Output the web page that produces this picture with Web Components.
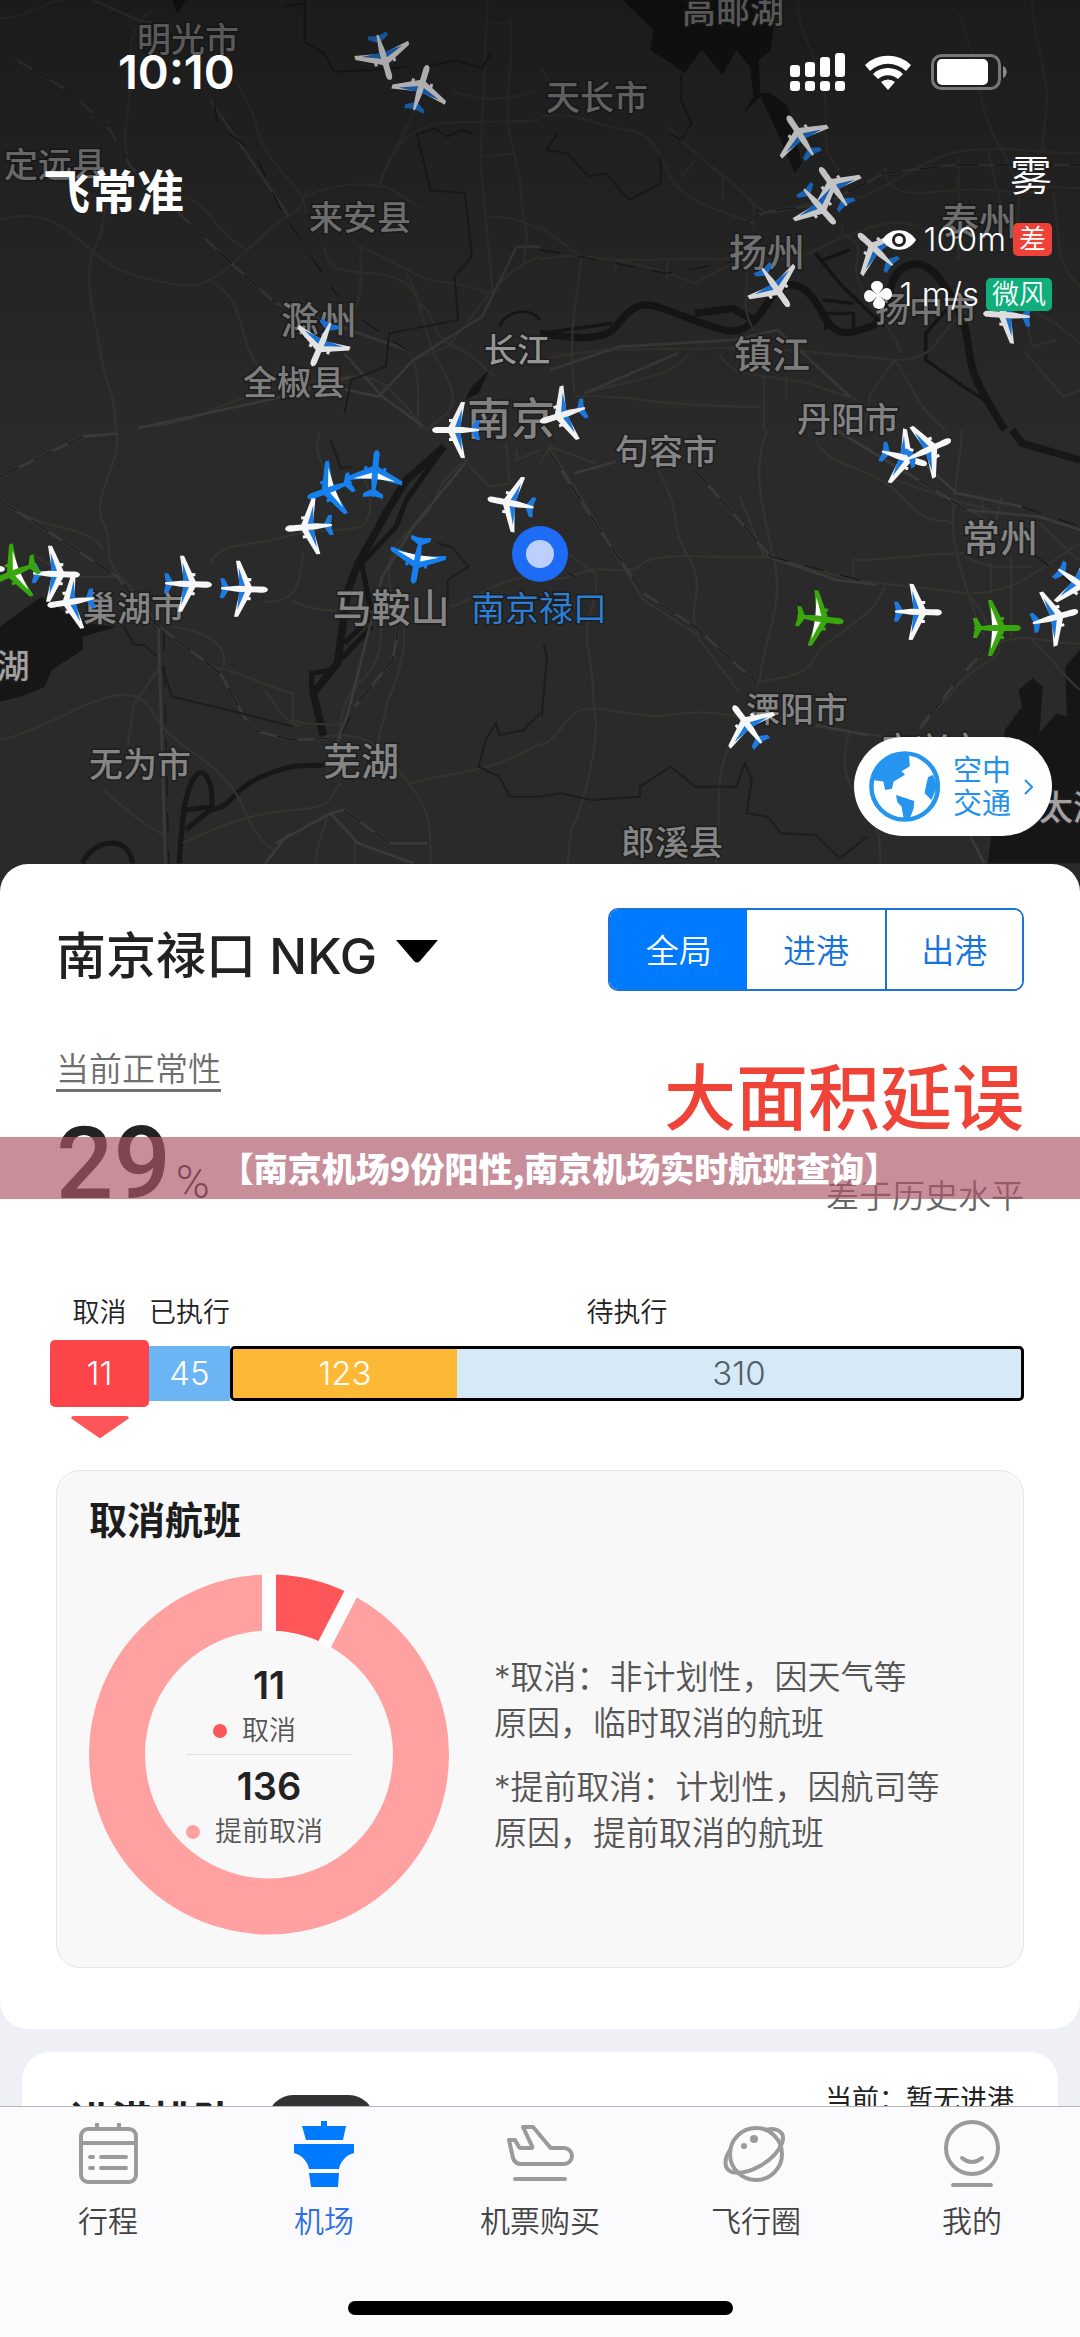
<!DOCTYPE html>
<html lang="zh-CN">
<head>
<meta charset="utf-8">
<meta name="viewport" content="width=device-width, initial-scale=1">
<title>飞常准</title>
<style>
  body { margin: 0; background: #eff0f5; font-family: Inter, "Noto Sans CJK SC", sans-serif; font-weight: 350; color: #222; }
</style>
</head>
<body>
<app-shell>
  <airport-hero></airport-hero>
  <airport-sheet>
    <sheet-head slot="head"></sheet-head>
    <punctuality-stats></punctuality-stats>
    <flight-bar></flight-bar>
    <cancel-panel></cancel-panel>
  </airport-sheet>
  <queue-card></queue-card>
  <title-banner slot="banner">【南京机场9份阳性,南京机场实时航班查询】</title-banner>
  <tab-bar slot="tabs"></tab-bar>
</app-shell>

<script>
const define = (name, html) => customElements.define(name, class extends HTMLElement {
  constructor() {
    super();
    this.attachShadow({ mode: 'open' }).innerHTML = html;
  }
});

define('app-shell', `
<style>
  :host { display: flex; flex-direction: column; height: 100vh; position: relative; overflow: hidden; }
  main { flex: 1; min-height: 0; overflow: hidden; }
</style>
<main><slot></slot></main>
<slot name="banner"></slot>
<slot name="tabs"></slot>`);

/* ---------- map ---------- */
const labels = [
  ['明光市', 188, 37, 34], ['定远县', 55, 162, 34], ['来安县', 360, 215, 34], ['滁州', 319, 317, 38],
  ['全椒县', 294, 380, 34], ['长江', 517, 348, 33, '#a2a2a2'], ['南京', 511, 416, 44], ['高邮湖', 733, 8, 34],
  ['天长市', 597, 95, 34], ['扬州', 767, 249, 38], ['泰州', 979, 218, 38], ['扬中市', 926, 307, 34],
  ['镇江', 772, 351, 38], ['丹阳市', 848, 417, 34], ['句容市', 666, 449, 34], ['常州', 1000, 535, 38],
  ['溧阳市', 797, 707, 34], ['郎溪县', 672, 840, 34], ['宜兴市', 932, 747, 34], ['太湖', 1073, 805, 34, '#a2a2a2'],
  ['巢湖市', 134, 606, 34], ['湖', 13, 664, 33, '#a2a2a2'], ['马鞍山', 391, 605, 39], ['无为市', 140, 762, 34],
  ['芜湖', 361, 758, 38]
];
const planes = [
  ['w', 384, 58, 164], ['w', 421, 87, 17], ['w', 321, 345, 203], ['w', 800, 135, -33], ['w', 833, 186, -35],
  ['w', 820, 207, 138], ['w', 875, 249, -47], ['w', 776, 288, 145], ['w', 1006, 315, -86], ['w', 455, 430, -90],
  ['w', 562, 415, -107], ['w', 747, 724, -37], ['w', 905, 458, 106], ['w', 930, 449, 66], ['w', 919, 612, 91],
  ['g', 821, 619, 97], ['g', 998, 628, 90], ['w', 1056, 617, 75], ['w', 1078, 583, 125], ['b', 329, 490, -110],
  ['b', 375, 473, 5], ['w', 308, 527, -95], ['b', 417, 561, 190], ['w', 510, 503, -79], ['w', -18, 569, 90],
  ['w', 57, 574, 92], ['w', 70, 602, -99], ['g', 14, 573, -112], ['w', 189, 584, 92], ['w', 245, 589, 92]
];
const skins = {
  w: ['#f7f7f7', '#1f7ae0', '#1f7ae0'],
  b: ['#1580ee', '#ffffff', '#1580ee'],
  g: ['#3aa60e', '#ffffff', '#3aa60e']
};
const plane = ([skin, x, y, turn]) => {
  const [body, stripe, tail] = skins[skin];
  return `<g transform="translate(${x} ${y}) rotate(${turn})">
    <path fill="${tail}" d="M-1 16 L-10 21 V25 L0 23 L10 25 V21 L1 16Z"/>
    <path fill="${body}" d="M-2 -7 L-28 6 L-28 10 L-2 5 L2 5 L28 10 L28 6 L2 -7Z"/>
    <path fill="${stripe}" d="M-3 0 L-21 7 L-3 6 L-1 11 H1 L3 6 L21 7 L3 0Z"/>
    <path fill="${body}" d="M-11 -6h3v5h-3zM8 -6h3v5h-3z"/>
    <path fill="${body}" d="M0 -23 C4 -22 3 -17 3 -12 V8 L1 24 H-1 L-3 8 V-12 C-3 -17 -4 -22 0 -23Z"/>
  </g>`;
};
define('flight-map', `
<style>
  :host { display: block; }
  svg { display: block; width: 100%; height: auto; }
  .road path { fill: none; stroke: #35332e; stroke-width: 7; }
  .road .rail { stroke: #3a3a3a; stroke-width: 8; }
  .road .dash { stroke: #1a1a1a; stroke-width: 4; stroke-dasharray: 60 50; }
  .road .edge { stroke: #1d1d1d; stroke-width: 6; }
  .road .river { stroke: #171717; stroke-width: 22; stroke-linejoin: round; }
  .road .lake { fill: #161616; stroke: none; }
  text { font-family: "Noto Sans CJK SC", sans-serif; font-weight: 500; text-anchor: middle; dominant-baseline: central; stroke: #1e1e1e; stroke-width: 3; paint-order: stroke; }
</style>
<svg viewBox="0 0 1080 892" role="img" aria-label="南京周边空中交通地图">
  <defs>
    <linearGradient id="shade" x1="0" y1="0" x2="0" y2="1">
      <stop offset="0" stop-color="#000" stop-opacity=".36"/><stop offset=".5" stop-color="#000" stop-opacity="0"/>
    </linearGradient>
  </defs>
  <rect width="1080" height="892" fill="#2a2a2a"/>
  <g class="road" transform="scale(.3444 .3333)">
    <path d="M0 55C90 55 130 0 190 0M370 470C350 400 380 330 378 240S370 90 440 30M0 660C120 620 190 680 270 755S440 840 520 855S660 810 760 710S860 670 890 570M270 755C300 700 300 650 310 600M270 755C240 850 280 960 290 1050S340 1190 335 1290M610 840C700 900 690 960 720 1040S780 1110 790 1140M890 590C980 540 1100 550 1140 570S1200 620 1225 620M1100 560C1130 450 1190 380 1280 370S1500 370 1568 360M1100 560C1140 440 1180 400 1205 330M1415 0L1395 490L1430 870L1300 1040L1200 1080L1110 1180M1480 50C1500 200 1450 300 1490 450S1500 600 1530 700L1520 800M1040 740C1180 790 1200 840 1280 845S1400 880 1430 880M940 740C960 800 950 810 1080 820S1200 900 1230 920S1250 1010 1320 1040S1390 1100 1440 1130M1050 740C1040 800 1060 860 1030 930M680 240C760 350 730 400 790 480S880 570 890 640M520 590C610 600 620 700 720 750M400 1280C550 1280 620 1220 720 1190S900 1140 1020 1130S1180 1240 1240 1290M1180 820C1230 900 1220 1000 1290 1120S1260 1260 1240 1290M1420 70H1480M1400 470L1490 460M1420 650C1500 650 1530 670 1568 690M1430 880C1480 800 1530 790 1568 770M1200 1080C1230 1190 1200 1230 1220 1290M1310 270C1400 310 1470 300 1568 270"/>
    <path class="rail" d="M0 150L210 280L320 390L380 500L640 760L800 910L1180 1050M840 650L610 300M400 1285L800 1195L1020 1130M1568 740L1500 740L1400 950L1200 1080L1100 1190L960 1160M1000 1060L1110 1190L1230 1280M270 0L400 60L500 80"/>
    <path class="dash" d="M0 150L210 280L320 390L380 500L640 760L800 910M610 200L630 370L740 460L820 640L860 700L980 890M1050 960L1180 1050"/>
    <path class="edge" d="M885 0V125L940 160L970 215L1080 210L1180 200M1240 200L1320 180L1400 205L1425 160M1210 400L1250 570L1350 580L1370 770L1320 830L1330 960L1130 1000L1120 1100L1020 1140L1000 1240M1220 400L1260 385L1300 410L1340 390L1370 400M820 20L880 10"/>
    <path class="lake" d="M500 0H540L515 40ZM1420 1110L1390 1180L1350 1200L1370 1160Z"/>
    <path class="river" d="M1450 980C1470 930 1540 920 1568 960" style="stroke-width:8"/>
  </g>
  <g class="road" transform="translate(540 0) scale(.3444 .3333)">
    <path class="lake" d="M240 0L280 40L330 90L320 150L380 190L420 220L470 150L530 225L570 150L610 200L620 290L590 340L640 290L690 400L740 520L760 490L720 320L670 280L640 280L635 180L670 150L680 70V0Z"/>
    <path class="river" d="M0 1000C120 1020 190 1020 220 980S280 900 340 920S440 960 500 980S600 1010 660 910S780 860 820 940S900 1000 960 980S1000 830 1060 800S1160 830 1200 900S1240 1020 1250 1080S1290 1190 1350 1290M450 940L560 925L620 960"/>
    <path class="river" style="stroke-width:10" d="M830 990V940H910V990M1180 930L1120 1000V1080L1230 1160L1290 1200M0 1000L210 970M820 780L900 750M800 760L870 850L1000 980M820 900L910 910"/>
    <path d="M0 350C100 330 170 380 250 390S340 450 380 530S520 630 620 670M370 380C460 480 560 540 620 610S760 590 870 600S1100 460 1250 450S1430 460 1568 460M0 680L120 770C250 790 400 770 590 780S800 740 910 700S1030 660 1100 680M0 780C100 750 250 780 370 820L450 850L580 780M590 780C620 850 570 900 620 990M120 770C110 900 80 960 100 1180M750 0C740 100 830 200 830 320S820 450 870 510M1000 500C1010 600 1080 580 1220 570S1400 600 1480 560L1568 565M1215 40C1280 200 1260 300 1330 430S1400 600 1380 690M1430 0C1430 120 1480 220 1470 330S1450 430 1470 460M1490 580C1510 700 1490 790 1568 860M0 1080C150 1040 300 1050 500 1045S900 1070 1030 1080S1150 980 1260 920M1050 1060C1010 950 900 880 920 780S860 740 880 670M520 1060C560 1140 650 1120 780 1150L920 1200M100 1190C250 1180 330 1220 640 1220M650 1130V1290M715 1130V1200M1400 920L1430 1040L1500 1020M1400 920C1500 960 1530 1000 1568 1030M1410 1060L1520 1190L1568 1170M1030 1080C1090 1170 1090 1220 1180 1290M1215 470V780M1300 450L1340 620M410 530L450 480M620 610V690M530 530V600M430 1060C400 1130 260 1140 130 1180M940 1290L960 1180L1030 1080M220 780V810M370 780V840M0 200L30 250"/>
    <path class="rail" d="M590 680C640 610 750 640 850 600L1000 520L1200 495H1568M30 1110L230 1040L560 1020L690 990L900 1190M130 1180L400 1060"/>
    <path class="dash" d="M590 680C640 610 750 640 850 600L1000 520L1200 495H1568M0 750L120 770L370 820L590 780"/>
    <path class="edge" d="M50 400L20 450L80 460L140 530L190 520L260 600L350 550L350 470M410 220V300L440 370L410 420L380 400"/>
  </g>
  <g class="road" transform="translate(0 430) scale(.3444 .3333)">
    <path class="lake" d="M0 590L120 500L240 580L340 590L240 620L240 660L150 720L130 770L60 800L0 815Z"/>
    <path class="river" d="M1290 50L1180 150L1120 250L1100 290L1040 400L1010 480L980 700L910 790L940 920" />
    <path class="river" style="stroke-width:15" d="M1290 50L1180 210L1150 290L1050 400L1080 560L1000 640M1080 590L960 720L905 730V790M940 1005C860 1010 850 1000 760 1040S680 1130 610 1140L540 1200M520 1300C530 1180 530 1110 560 1050S620 1060 615 1130L540 1140M240 1300C260 1240 370 1200 385 1300"/>
    <path d="M340 0C350 120 260 200 300 280S280 380 370 460L450 570M60 250C140 300 270 290 300 360M610 400C640 330 750 350 830 320S1040 310 1060 280S1080 200 1060 150M770 515C850 520 870 480 880 370M850 510C900 550 1000 540 1090 545M0 930C130 900 260 800 350 795S430 850 490 910S660 1020 700 1120S770 1240 800 1265M465 710L390 820L370 950M300 1080C400 1170 440 1200 480 1215M500 590C620 610 660 650 650 710M610 710C700 720 760 770 850 790V870L880 880L1000 885M770 780C810 850 830 870 870 890M940 920C1080 900 1110 960 1180 1050S1250 1180 1250 1300M1100 560C1120 650 1090 720 1040 760S990 900 980 930M1170 550C1190 700 1130 780 1120 840S1100 890 1100 940M1190 1060C1330 1020 1400 1040 1568 940M530 1240C650 1180 730 1150 860 1140S960 1080 990 1060M950 1160C930 1230 920 1250 915 1300M1030 1230V1300M930 0C900 80 960 120 950 180M1340 100C1230 200 1300 200 1190 300S1160 500 1130 550M1568 440C1440 440 1400 500 1310 530M1340 80L1420 170L1480 160L1470 40M1500 60V90L1568 60M90 370L200 440H340"/>
    <path class="rail" d="M0 140L240 20L340 10M0 210L340 440L450 580L640 730L730 900L850 930L950 925M460 590L480 1300M1350 100L1200 290L1110 440L1010 850L980 940M800 1240L960 1150L1000 1140L1130 1240L1240 1240M1160 570L1140 690L1030 830M960 1150L1040 1240L1200 1300M770 1300L840 1210"/>
    <path class="dash" d="M0 210L340 440L450 580L640 730L730 900L850 930L950 925M475 600L490 1300M1160 570L1140 690L1030 830L980 940M1000 1140L1130 1240M0 140L240 20"/>
    <path class="edge" d="M1270 340L1310 350L1360 410L1300 450V520M360 590L390 645H420L455 680M470 710L500 800L700 850L850 890M1568 850L1520 900L1450 915L1440 880L1410 930L1390 1010L1450 1040L1480 1100H1568M960 30L990 115L1020 110"/>
  </g>
  <g class="road" transform="translate(540 430) scale(.3444 .3333)">
    <path class="lake" d="M1568 660L1525 710L1530 860L1500 850L1450 910L1460 770L1430 745L1390 780L1400 830L1350 900L1300 1300H1568Z"/>
    <path class="river" d="M1370 0L1400 40L1568 90"/>
    <path d="M30 60L100 170L200 340L300 510L450 610L580 790M660 0C610 120 650 250 680 390S650 620 640 740L630 770M340 120C420 250 370 280 430 380S420 520 460 620M0 450C80 450 100 430 150 420S260 440 300 400S560 390 660 380L910 450L1240 490C1380 490 1430 430 1568 340M680 390L860 450M80 370L160 430C180 500 120 560 140 660S150 790 160 850S140 1100 90 1200L80 1300M0 950C60 920 70 860 120 840S280 870 380 855S500 850 580 860M550 950C500 1050 530 1160 510 1300M640 755C720 740 770 740 800 680S980 560 1000 470M910 440V390C1050 390 1080 370 1230 370M800 30C840 120 960 100 1050 200S1160 260 1200 280M1225 0C1220 140 1180 250 1210 370S1250 520 1290 620M1240 490C1290 540 1300 600 1330 640S1240 720 1210 770S1120 850 1100 900M1330 640C1420 600 1490 650 1568 640M1420 620C1500 700 1520 740 1568 780M900 900C870 1000 890 1050 910 1080M800 890L1000 920M960 1160C1000 1230 980 1270 990 1300M1450 280C1550 370 1540 380 1568 390M1190 210L1300 270M1280 190L1290 250M1340 200L1320 290M1368 380V620M1310 400V490M1230 380L1310 410H1430M0 100L30 50L160 100M1030 150L1200 210L1310 240M580 200L650 380"/>
    <path class="rail" d="M30 70L180 310L300 490L450 590L630 760M100 130L220 95M450 120L670 380M670 380L860 450L980 465M860 0L1240 240L1450 260L1568 300M1080 70L1210 190L1400 230M1310 640L1220 740L1100 900M800 885L950 915M1240 1200L1290 1300"/>
    <path class="dash" d="M30 70L180 310L300 490L450 590L630 760M450 120L670 380L980 465M1100 150L1240 240M1400 230L1568 290M1430 370L1568 480M1310 640L1220 740L1100 900"/>
    <path class="edge" d="M0 1100L60 1090L150 1110L290 1100V1070L380 1010L450 1070L570 1070L595 1000L615 1050L600 1150L660 1160L700 1210L800 1215L870 1285L950 1220M10 640L20 680L5 860M80 430L100 440"/>
  </g>
  <g>${labels.map(([t, x, y, s, c]) => `<text x="${x}" y="${y}" font-size="${s}" fill="${c || '#858585'}">${t}</text>`).join('')}</g>
  <text x="539" y="606" font-size="34" fill="#2a7fd4" style="font-weight:400">南京禄口</text>
  ${planes.map(plane).join('')}
  <circle cx="540" cy="554" r="28" fill="#1e6bf5"/><circle cx="540" cy="554" r="14" fill="#bcd0fb"/>
  <rect width="1080" height="892" fill="url(#shade)"/>
</svg>`);

/* ---------- status bar ---------- */
define('status-bar', `
<style>
  :host { display: flex; align-items: center; justify-content: space-between; height: 40px; padding: 52px 72px 0 118px; color: #fff; }
  time { font-size: 47px; line-height: 40px; font-weight: 600; }
  div { display: flex; align-items: center; gap: 20px; }
  svg { display: block; fill: #fff; }
</style>
<time>10:10</time>
<div>
  <svg width="55" height="38" viewBox="0 0 55 38" role="img" aria-label="信号"><rect y="12" width="10" height="12" rx="3"/><rect x="15" y="9" width="10" height="15" rx="3"/><rect x="30" y="4" width="10" height="20" rx="3"/><rect x="45" width="10" height="24" rx="3"/><rect y="28" width="10" height="10" rx="3"/><rect x="15" y="28" width="10" height="10" rx="3"/><rect x="30" y="28" width="10" height="10" rx="3"/><rect x="45" y="28" width="10" height="10" rx="3"/></svg>
  <svg width="46" height="35" viewBox="0 0 46 35" role="img" aria-label="无线网络"><path d="M0 10A33 33 0 0 1 46 10L41 16A26 26 0 0 0 5 16ZM8 19A22 22 0 0 1 38 19L33 24A15 15 0 0 0 13 24ZM16 27A11 11 0 0 1 30 27L23 35Z"/></svg>
  <svg width="77" height="36" viewBox="0 0 77 36" role="img" aria-label="电池"><rect x="1.500" y="1.500" width="67" height="33" rx="9" fill="none" stroke="#777" stroke-width="3"/><rect x="6" y="5" width="51" height="26" rx="5"/><path d="M72 12C77 14 77 22 72 24Z" fill="#888"/></svg>
</div>`);

/* ---------- weather ---------- */
define('weather-row', `
<style>
  :host { display: flex; align-items: center; justify-content: flex-end; gap: 7px; height: 33px; font-size: 33px; line-height: 33px; }
  ::slotted(span) { font-weight: 300; }
  ::slotted(b) { font-size: 27px; font-weight: 350; line-height: 33px; padding: 0 6px; border-radius: 5px; background: var(--badge); }
</style>
<slot></slot>`);
define('weather-info', `
<style>
  :host { display: flex; flex-direction: column; align-items: flex-end; gap: 22px; color: #fff; }
  strong { font-size: 42px; line-height: 42px; font-weight: 350; margin-bottom: 4px; }
  svg { display: block; }
</style>
<strong>雾</strong>
<weather-row style="--badge:#ee4238"><svg width="34" height="20" viewBox="0 0 34 20" fill="#fff"><path d="M0 10C8 -3 26 -3 34 10C26 23 8 23 0 10Z"/><circle cx="17" cy="10" r="7" fill="#222"/><circle cx="17" cy="10" r="4"/></svg><span>100m</span><b>差</b></weather-row>
<weather-row style="--badge:#10ae7b"><svg width="28" height="28" viewBox="-14 -14 28 28" fill="#fff"><path d="M0 1C-2 -3 -7 -4 -7 -9A6 5 0 0 1 5 -9C5 -6 2 -4 0 1Z"/><path transform="rotate(90)" d="M0 1C-2 -3 -7 -4 -7 -9A6 5 0 0 1 5 -9C5 -6 2 -4 0 1Z"/><path transform="rotate(180)" d="M0 1C-2 -3 -7 -4 -7 -9A6 5 0 0 1 5 -9C5 -6 2 -4 0 1Z"/><path transform="rotate(270)" d="M0 1C-2 -3 -7 -4 -7 -9A6 5 0 0 1 5 -9C5 -6 2 -4 0 1Z"/></svg><span>1 m/s</span><b>微风</b></weather-row>`);

define('traffic-button', `
<style>
  :host { display: block; }
  button { display: flex; align-items: center; gap: 13px; height: 99px; padding: 0 19px 0 15px; border: 0; border-radius: 50px; background: #fff; color: #2491ea; font: 400 29px/33px Inter, "Noto Sans CJK SC", sans-serif; }
  svg { display: block; }
</style>
<button type="button">
  <svg width="71" height="71" viewBox="953 960 207 210" preserveAspectRatio="none" fill="#2595ef"><ellipse cx="1057" cy="1065" rx="97" ry="98" fill="#fff" stroke="#2595ef" stroke-width="13"/><path d="M962 1046L995 1050L1000 1075L1020 1072L1025 1050L1058 1030L1048 1020L1072 1005L1070 975L1057 965C1000 970 965 1000 962 1046Z"/><path d="M1032 1090L1085 1108L1083 1130L1070 1165H1055L1048 1125L1035 1110Z"/><path d="M1125 1038L1140 1030L1152 1065L1135 1105L1115 1085L1120 1060Z"/></svg>
  <span>空中<br>交通</span>
  <svg width="9" height="16" viewBox="0 0 9 16" fill="none" stroke="#2491ea" stroke-width="2"><path d="M1 1L8 8L1 15"/></svg>
</button>`);

define('airport-hero', `
<style>
  :host { display: grid; }
  flight-map, .over { grid-area: 1 / 1; }
  .over { display: flex; flex-direction: column; position: relative; }
  .row { display: flex; justify-content: space-between; align-items: flex-start; padding: 63px 28px 0 43px; flex: 1; }
  h1 { margin: 10px 0 0; font: 700 47px/48px "Noto Sans CJK SC", sans-serif; color: #fff; }
  traffic-button { align-self: flex-end; margin: 0 28px 56px 0; }
</style>
<flight-map></flight-map>
<div class="over">
  <status-bar></status-bar>
  <div class="row"><h1>飞常准</h1><weather-info></weather-info></div>
  <traffic-button></traffic-button>
</div>`);

/* ---------- sheet ---------- */
define('airport-sheet', `
<style>
  :host { display: block; position: relative; margin-top: -28px; padding: 44px 56px 61px; border-radius: 28px; background: #fff; }
</style>
<slot name="head"></slot><slot></slot>`);

define('sheet-head', `
<style>
  :host { display: flex; justify-content: space-between; align-items: center; }
  label { display: flex; align-items: center; gap: 18px; padding-top: 4px; }
  select { appearance: none; margin: 0; padding: 8px 0 0; border: 0; background: none; color: #222; font: 500 50px/60px Inter, "Noto Sans CJK SC", sans-serif; }
  .seg { display: grid; grid-template-columns: repeat(3, 1fr); width: 416px; height: 83px; box-sizing: border-box; border: 2px solid #1a74d8; border-radius: 10px; overflow: hidden; }
  button { border: 0; border-left: 2px solid #1a74d8; padding: 0 0 2px; background: #fff; color: #1573e0; font: 350 33px/40px "Noto Sans CJK SC", sans-serif; }
  button[aria-pressed=true] { background: #007aff; color: #fff; border: 0; }
  button[aria-pressed=true] + button { border: 0; }
</style>
<label><select aria-label="机场"><option>南京禄口 NKG</option></select>
<svg width="42" height="23" viewBox="0 0 42 23"><path d="M0 0H42L24 21Q21 24 18 21Z"/></svg></label>
<div class="seg"><button type="button" aria-pressed="true">全局</button><button type="button" aria-pressed="false">进港</button><button type="button" aria-pressed="false">出港</button></div>`);

define('punctuality-stats', `
<style>
  :host { display: flex; justify-content: space-between; margin-top: 59px; }
  .left { display: flex; flex-direction: column; align-items: flex-start; gap: 21px; }
  a { color: #6e6e6e; text-decoration: none; font-size: 33px; line-height: 39px; border-bottom: 3px solid #707070; }
  p { display: flex; align-items: baseline; gap: 5px; margin: 0; font: 500 101px/102px Roboto, sans-serif; }
  small { font-size: 46px; line-height: 46px; font-weight: 300; }
  .right { display: flex; flex-direction: column; align-items: flex-end; gap: 38px; padding-top: 8px; }
  strong { font-size: 72px; line-height: 80px; font-weight: 500; color: #ef4338; }
  span { font-size: 33px; line-height: 40px; color: #666; }
</style>
<div class="left"><a href="#rate">当前正常性</a><p>29<small>%</small></p></div>
<div class="right"><strong>大面积延误</strong><span>差于历史水平</span></div>`);

define('flight-bar', `
<style>
  :host { display: grid; grid-template-columns: 99px 81px 1fr; margin: 77px 0 0 -6px; row-gap: 7px; align-items: center; text-align: center; white-space: nowrap; }
  span { font-size: 27px; line-height: 40px; }
  b { display: block; font-size: 33px; font-weight: 300; color: #fff; }
  .cut { line-height: 67px; background: #fd4448; border-radius: 5px; }
  .done { line-height: 55px; background: #6cb5f4; }
  .wait { display: flex; height: 49px; border: 3px solid #000; border-radius: 5px; background: #d6e9f6; overflow: hidden; line-height: 49px; }
  .late { flex: 123; background: #fdb935; }
  .plan { flex: 310; color: #51606a; }
  svg { display: block; margin: 2px auto 0; }
</style>
<span>取消</span><span>已执行</span><span>待执行</span>
<b class="cut">11</b><b class="done">45</b><div class="wait"><b class="late">123</b><b class="plan">310</b></div>
<svg width="58" height="22" viewBox="0 0 58 22" fill="#fd5558"><path d="M2 0H56Q59 1 57 3L31 21Q29 23 27 21L1 3Q-1 1 2 0Z"/></svg>`);

define('cancel-panel', `
<style>
  :host { display: block; margin-top: 32px; padding: 24px 32px 32px; border: 1px solid #e6e6e8; border-radius: 24px; background: #f8f8f9; }
  h2 { margin: 0 0 29px; font-size: 38px; line-height: 50px; font-weight: 700; color: #1d1d20; }
  .row { display: flex; align-items: center; gap: 45px; }
  .ring { display: grid; flex: none; }
  .ring > * { grid-area: 1 / 1; }
  .mid { display: flex; flex-direction: column; align-items: center; justify-content: center; padding-top: 8px; line-height: 46px; }
  .mid b { font-size: 38px; font-weight: 600; }
  .mid span { display: flex; align-items: center; gap: 15px; padding-right: 29px; font-size: 27px; color: #555; }
  i { width: 14px; height: 14px; border-radius: 50%; background: #fd5558; }
  i.soft { background: #ffa1a1; }
  hr { width: 166px; margin: 0 0 8px; border: 0; border-top: 1px solid #dedede; }
  p { margin: 0 0 18px; font-size: 33px; line-height: 46px; color: #555; }
  p:last-child { margin: 0; }
</style>
<h2>取消航班</h2>
<div class="row">
  <div class="ring">
    <svg width="360" height="361" viewBox="-180 -180 360 360" fill="none" stroke-width="56">
      <circle r="152" stroke="#ffa1a1"/><path d="M0 -152A152 152 0 0 1 69 -135.500" stroke="#ff5659"/>
      <path d="M0 -122V-181M55 -109L83 -163" stroke="#fdfdfd" stroke-width="14"/>
    </svg>
    <div class="mid"><b>11</b><span><i></i>取消</span><hr><b>136</b><span><i class="soft"></i>提前取消</span></div>
  </div>
  <div><p>*取消：非计划性，因天气等<br>原因，临时取消的航班</p><p>*提前取消：计划性，因航司等<br>原因，提前取消的航班</p></div>
</div>`);

define('queue-card', `
<style>
  :host { display: flex; align-items: flex-start; margin: 23px 22px 0; padding: 28px 44px 40px 48px; border-radius: 28px; background: #fff; }
  h2 { margin: 15px 34px 0 0; font-size: 41px; line-height: 52px; font-weight: 700; }
  i { width: 106px; height: 50px; margin-top: 15px; border-radius: 25px; background: #333335; }
  span { margin-left: auto; font-size: 27px; line-height: 40px; font-weight: 400; }
</style>
<h2>进港排队</h2><i></i><span>当前：暂无进港</span>`);

define('title-banner', `
<style>
  :host { position: absolute; top: 1137px; left: 0; right: 0; padding-left: 38px; text-align: center; background: rgba(173, 88, 106, .67); color: #fff; font: 900 34px/62px "Noto Sans CJK SC", sans-serif; }
</style>
<slot></slot>`);

/* ---------- tab bar ---------- */
const tabs = [
  ['行程', '<path d="M23 3V8M45 3V8M8 23H62"/><rect x="7" y="9" width="55" height="53" rx="7"/><path stroke-linecap="round" d="M16 37H19M27 37H52M16 48H19M27 48H52"/>'],
  ['机场', '<g fill="#007aff" stroke="none"><path d="M31 1H37V6H56L53 20H16L12 6H31ZM4 24H64V33C56 35 50 42 49 49H19C18 42 12 35 4 33ZM19 53H49L48 67H21Z"/></g>'],
  ['机票购买', '<path stroke-linejoin="round" d="M3 20L9 20L13 27Q14 28 16 28H25Q27 28 26 26L17 7H27L43 26Q44 28 46 28H58A8 8 0 0 1 58 44H15Q9 44 7 38Z"/><path stroke-linecap="round" d="M9 59H59"/>'],
  ['飞行圈', '<circle cx="34" cy="34" r="26"/><path d="M9 29C2 37 1 49 10 52C26 56 53 41 60 23C64 12 55 7 44 10"/><circle cx="32" cy="19" r="4" fill="#9a9a9a" stroke="none"/><circle cx="22" cy="26" r="3" fill="#9a9a9a" stroke="none"/>'],
  ['我的', '<circle cx="34" cy="28" r="26"/><path stroke-linecap="round" d="M24 38Q34 46 44 38M15 65H53"/>']
];
define('tab-bar', `
<style>
  :host { display: block; flex: none; position: relative; border-top: 1px solid #b4b4b6; background: #fbfbfd; padding: 13px 0 22px; }
  nav { display: grid; grid-template-columns: repeat(5, 1fr); }
  a { display: flex; flex-direction: column; align-items: center; gap: 13px; font-size: 30px; line-height: 40px; color: #444; text-decoration: none; }
  a[aria-current] { color: #2d70e8; }
  svg { display: block; }
  i { display: block; width: 385px; height: 14px; margin: 60px auto 0; border-radius: 7px; background: #000; }
</style>
<nav>${tabs.map(([t, d], n) => `<a href="#tab${n}"${n === 1 ? ' aria-current="page"' : ''}><svg width="68" height="68" viewBox="0 0 68 68" fill="none" stroke="#9a9a9a" stroke-width="4">${d}</svg>${t}</a>`).join('')}</nav>
<i></i>`);
</script>
</body>
</html>
